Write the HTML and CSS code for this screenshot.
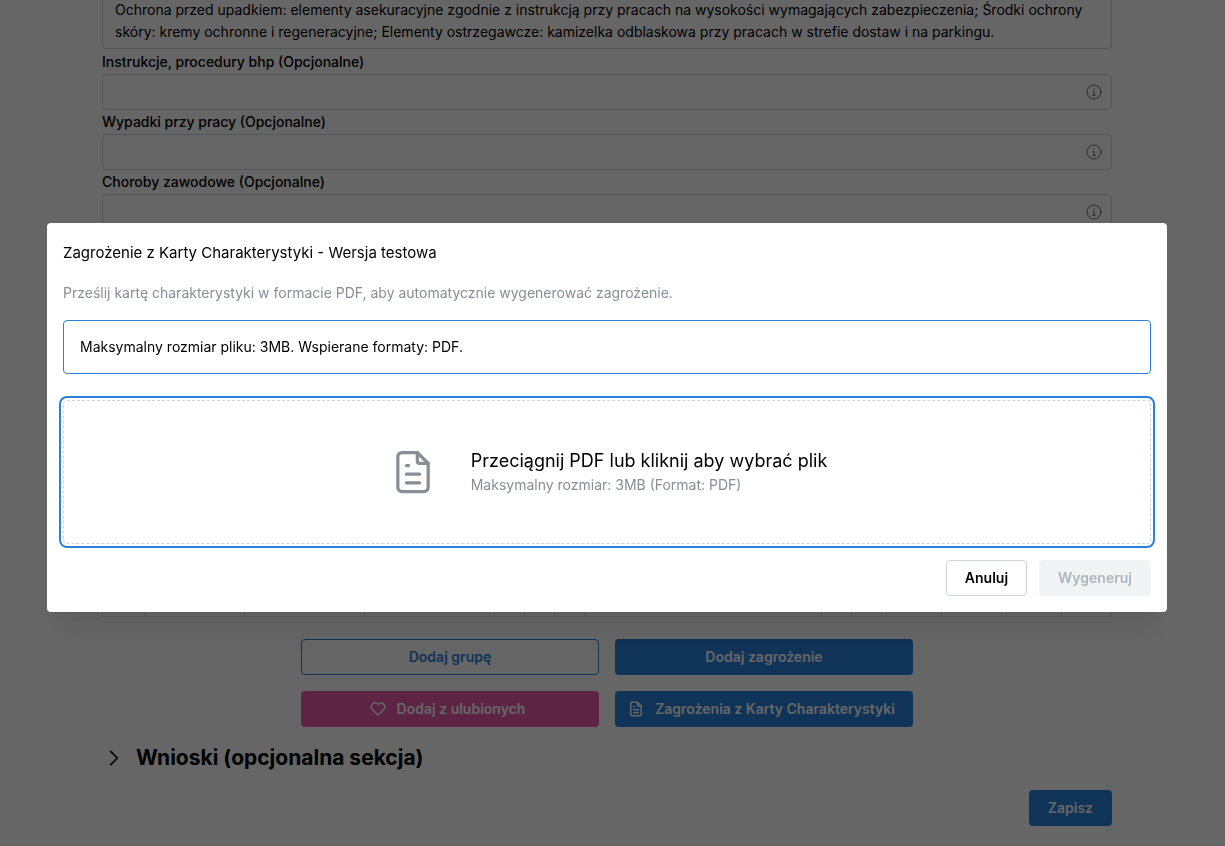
FILE: index.html
```html
<!DOCTYPE html>
<html lang="pl">
<head>
<meta charset="utf-8">
<meta name="viewport" content="width=device-width, initial-scale=1">
<title>Karta oceny ryzyka</title>
<link rel="stylesheet" href="styles.css">
</head>
<body>
<svg class="sprite" aria-hidden="true">
  <symbol id="icon-info" viewBox="0 0 24 24"><circle cx="12" cy="12" r="10.5"/><path d="M12 7v1M11 11h1v6M10.500 17h3"/></symbol>
  <symbol id="icon-file" viewBox="0 0 24 24"><path d="M14 3v4a1 1 0 0 0 1 1h4"/><path d="M17 21H7a2 2 0 0 1-2-2V5a2 2 0 0 1 2-2h7l5 5v11a2 2 0 0 1-2 2z"/><path d="M9 9h1M9 13h6M9 17h6"/></symbol>
  <symbol id="icon-heart" viewBox="0 0 24 24"><path d="M19.500 12.572L12 20l-7.500-7.428A5 5 0 1 1 12 6.006a5 5 0 1 1 7.500 6.572"/></symbol>
  <symbol id="icon-chevron" viewBox="0 0 24 24"><path d="M8 4l8 8-8 8"/></symbol>
</svg>

<main class="page">
  <form class="form">
    <textarea class="textarea" rows="2" aria-label="Środki ochrony indywidualnej">Ochrona przed upadkiem: elementy asekuracyjne zgodnie z instrukcją przy pracach na wysokości wymagających zabezpieczenia; Środki ochrony skóry: kremy ochronne i regeneracyjne; Elementy ostrzegawcze: kamizelka odblaskowa przy pracach w strefie dostaw i na parkingu.</textarea>

    <div class="field">
      <label class="label" for="instructions">Instrukcje, procedury bhp (Opcjonalne)</label>
      <div class="input-box"><input class="input" id="instructions" type="text"><svg class="icon-info"><use href="#icon-info"/></svg></div>
    </div>
    <div class="field">
      <label class="label" for="accidents">Wypadki przy pracy (Opcjonalne)</label>
      <div class="input-box"><input class="input" id="accidents" type="text"><svg class="icon-info"><use href="#icon-info"/></svg></div>
    </div>
    <div class="field">
      <label class="label" for="diseases">Choroby zawodowe (Opcjonalne)</label>
      <div class="input-box"><input class="input" id="diseases" type="text"><svg class="icon-info"><use href="#icon-info"/></svg></div>
    </div>

    <table class="risks">
      <colgroup>
        <col class="w-42"><col class="w-100"><col class="w-120"><col class="w-130"><col class="w-30"><col class="w-30"><col class="w-30"><col><col class="w-30"><col class="w-30"><col class="w-60"><col class="w-60"><col class="w-60"><col class="w-50">
      </colgroup>
      <tbody><tr><td></td><td></td><td></td><td></td><td></td><td></td><td></td><td></td><td></td><td></td><td></td><td></td><td></td><td></td></tr></tbody>
    </table>

    <div class="actions">
      <button class="button outline" type="button">Dodaj grupę</button>
      <button class="button primary" type="button">Dodaj zagrożenie</button>
      <button class="button pink with-icon" type="button"><svg class="icon-button"><use href="#icon-heart"/></svg>Dodaj z ulubionych</button>
      <button class="button primary with-icon" type="button"><svg class="icon-button"><use href="#icon-file"/></svg>Zagrożenia z Karty Charakterystyki</button>
    </div>

    <h2 class="section"><button class="section-toggle" type="button" aria-expanded="false"><svg class="icon-chevron"><use href="#icon-chevron"/></svg>Wnioski (opcjonalna sekcja)</button></h2>

    <div class="save"><button class="button primary" type="submit">Zapisz</button></div>
  </form>
</main>

<div class="overlay">
  <section class="modal" role="dialog" aria-modal="true" aria-labelledby="modal-title">
    <h1 class="modal-title" id="modal-title">Zagrożenie z Karty Charakterystyki - Wersja testowa</h1>
    <p class="modal-text">Prześlij kartę charakterystyki w formacie PDF, aby automatycznie wygenerować zagrożenie.</p>
    <p class="notice">Maksymalny rozmiar pliku: 3MB. Wspierane formaty: PDF.</p>
    <button class="dropzone" type="button">
      <svg class="icon-file"><use href="#icon-file"/></svg>
      <span class="drop-copy">
        <span class="drop-title">Przeciągnij PDF lub kliknij aby wybrać plik</span>
        <span class="drop-hint">Maksymalny rozmiar: 3MB (Format: PDF)</span>
      </span>
    </button>
    <div class="modal-actions">
      <button class="button default" type="button">Anuluj</button>
      <button class="button" type="button" disabled>Wygeneruj</button>
    </div>
  </section>
</div>
</body>
</html>
```

FILE: styles.css
```css
* { box-sizing: border-box; }

body {
  margin: 0;
  background: #fff;
  color: #000;
  font: 14px/22px Inter, "Liberation Sans", sans-serif;
}

h1, h2, p { margin: 0; }

button, input, textarea { font: inherit; color: inherit; }

svg {
  flex: none;
  fill: none;
  stroke: currentColor;
  stroke-width: 2;
  stroke-linecap: round;
  stroke-linejoin: round;
}

.sprite { display: none; }

.page { padding: 0 113px 20px 102px; }

.form { display: flex; flex-direction: column; }

.textarea {
  display: block;
  width: 100%;
  height: 50px;
  margin: -1px 0 1px;
  padding: 0 12px 5px;
  border: 1px solid #ced4da;
  border-top: 0;
  border-radius: 0 0 4px 4px;
  background: #fff;
  resize: none;
  overflow: hidden;
}

.field { display: flex; flex-direction: column; padding-top: 1px; }

.label { padding-bottom: 1px; font-weight: 500; line-height: 22px; }

.input-box {
  display: flex;
  align-items: center;
  height: 36px;
  padding-right: 9px;
  border: 1px solid #ced4da;
  border-radius: 4px;
}

.input {
  flex: 1;
  min-width: 0;
  padding: 0 12px;
  border: 0;
  background: transparent;
  outline: 0;
}

.icon-info { width: 16px; height: 16px; stroke-width: 1; color: #222; }

.risks {
  width: 100%;
  margin-top: 26px;
  border-collapse: collapse;
  table-layout: fixed;
}

.risks td { height: 360px; padding: 0; border: 1px solid #dee2e6; }

.w-30 { width: 30px; }
.w-42 { width: 42px; }
.w-50 { width: 50px; }
.w-60 { width: 60px; }
.w-100 { width: 100px; }
.w-120 { width: 120px; }
.w-130 { width: 130px; }

.actions {
  display: grid;
  grid-template-columns: repeat(2, 298px);
  justify-content: center;
  gap: 16px;
  margin-top: 22px;
}

.button {
  display: flex;
  align-items: center;
  justify-content: center;
  height: 36px;
  padding: 0 18px;
  border: 1px solid transparent;
  border-radius: 4px;
  font-weight: 600;
  line-height: 20px;
  white-space: nowrap;
}

.with-icon { padding: 0 16px 0 10px; }

.primary { background: #2a80dc; color: #fff; }
.pink { background: #e85aaa; color: #fff; }
.outline { background: transparent; border-color: #2a80dc; color: #2a80dc; }
.default { background: #fff; border-color: #ced4da; }
.button:disabled { background: #f1f3f5; color: #adb5bd; }

.icon-button { width: 18px; height: 18px; margin-right: 10px; }

.section { margin-top: 14px; font-size: 21px; line-height: 34px; }

.section-toggle {
  display: flex;
  align-items: center;
  gap: 12px;
  padding: 0 2px;
  border: 0;
  background: none;
  font-weight: 700;
}

.icon-chevron { width: 20px; height: 20px; }

.save { display: flex; justify-content: flex-end; margin-top: 15px; }

.overlay {
  position: fixed;
  inset: 0;
  padding: 223px 58px 0 47px;
  background: rgba(0, 0, 0, .6);
}

.modal {
  display: flex;
  flex-direction: column;
  padding: 16px;
  border-radius: 4px;
  background: #fff;
  box-shadow: 0 1px 3px rgba(0, 0, 0, .05), 0 36px 28px -7px rgba(0, 0, 0, .05), 0 17px 17px -7px rgba(0, 0, 0, .04);
}

.modal-title { font-size: 15px; font-weight: 400; line-height: 28px; }

.modal-text { margin-top: 15px; color: #868e96; }

.notice {
  margin-top: 16px;
  padding: 15px 16px;
  border: 1px solid #2a80dc;
  border-radius: 4px;
}

.dropzone {
  display: flex;
  align-items: center;
  justify-content: center;
  gap: 32px;
  min-height: 144px;
  margin-top: 26px;
  padding: 16px;
  border: 1px dashed #ced4da;
  border-radius: 4px;
  outline: 2px solid #2a80dc;
  outline-offset: 2px;
  background: #fff;
  text-align: left;
}

.icon-file { width: 52px; height: 52px; stroke-width: 1.5; color: #868e96; }

.drop-copy { display: flex; flex-direction: column; padding-bottom: 2px; }

.drop-title { font-size: 18px; line-height: 28px; }

.drop-hint { color: #868e96; line-height: 20px; }

.modal-actions {
  display: flex;
  justify-content: flex-end;
  gap: 12px;
  margin-top: 16px;
}
```
